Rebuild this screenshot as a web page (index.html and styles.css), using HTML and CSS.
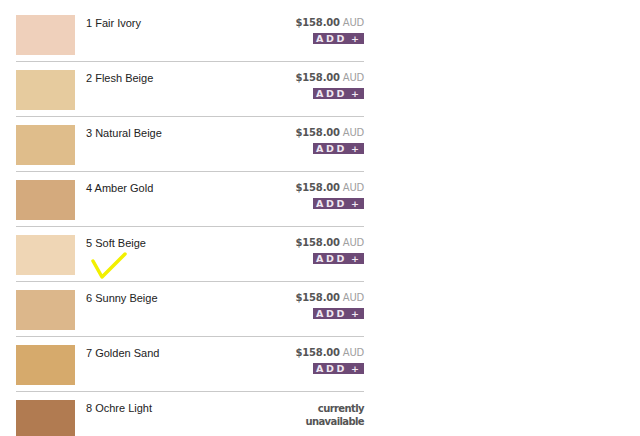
FILE: index.html
```html
<!DOCTYPE html>
<html>
<head>
<meta charset="utf-8">
<link rel="stylesheet" href="styles.css">
</head>
<body>
<div class="list">
  <div class="row">
    <div class="swatch s1"></div>
    <div class="name">1 Fair Ivory</div>
    <div class="buy"><div class="price"><b>$158.00</b> <span class="cur">AUD</span></div><div class="add"><span>ADD</span><span>+</span></div></div>
  </div>
  <div class="row">
    <div class="swatch s2"></div>
    <div class="name">2 Flesh Beige</div>
    <div class="buy"><div class="price"><b>$158.00</b> <span class="cur">AUD</span></div><div class="add"><span>ADD</span><span>+</span></div></div>
  </div>
  <div class="row">
    <div class="swatch s3"></div>
    <div class="name">3 Natural Beige</div>
    <div class="buy"><div class="price"><b>$158.00</b> <span class="cur">AUD</span></div><div class="add"><span>ADD</span><span>+</span></div></div>
  </div>
  <div class="row">
    <div class="swatch s4"></div>
    <div class="name">4 Amber Gold</div>
    <div class="buy"><div class="price"><b>$158.00</b> <span class="cur">AUD</span></div><div class="add"><span>ADD</span><span>+</span></div></div>
  </div>
  <div class="row">
    <div class="swatch s5"></div>
    <div class="name">5 Soft Beige</div>
    <div class="buy"><div class="price"><b>$158.00</b> <span class="cur">AUD</span></div><div class="add"><span>ADD</span><span>+</span></div></div>
    <svg class="check" width="44" height="32" viewBox="0 0 44 32"><path d="M7 12 L16 28 L39 5" fill="none" stroke="#f2f000" stroke-width="3.5" stroke-linecap="round" stroke-linejoin="round"/></svg>
  </div>
  <div class="row">
    <div class="swatch s6"></div>
    <div class="name">6 Sunny Beige</div>
    <div class="buy"><div class="price"><b>$158.00</b> <span class="cur">AUD</span></div><div class="add"><span>ADD</span><span>+</span></div></div>
  </div>
  <div class="row">
    <div class="swatch s7"></div>
    <div class="name">7 Golden Sand</div>
    <div class="buy"><div class="price"><b>$158.00</b> <span class="cur">AUD</span></div><div class="add"><span>ADD</span><span>+</span></div></div>
  </div>
  <div class="row">
    <div class="swatch s8"></div>
    <div class="name">8 Ochre Light</div>
    <div class="buy"><div class="na">currently<br>unavailable</div></div>
  </div>
</div>
</body>
</html>
```
FILE: styles.css
```css
html, body {
  margin: 0;
  padding: 0;
  background: #fff;
  overflow: hidden;
}
body {
  width: 640px;
  height: 436px;
}
.list {
  width: 348px;
  margin-left: 16px;
  padding-top: 15px;
}
.row {
  position: relative;
  display: flex;
  align-items: flex-start;
  height: 40px;
  padding-bottom: 6px;
  border-bottom: 1px solid #c9c9c9;
  margin-bottom: 8px;
}
.swatch {
  width: 59px;
  height: 40px;
  flex: none;
}
.s1 { background: #efd0bb; }
.s2 { background: #e6cb9e; }
.s3 { background: #dfbd8b; }
.s4 { background: #d4aa7d; }
.s5 { background: #efd6b5; }
.s6 { background: #dcb78b; }
.s7 { background: #d6aa6c; }
.s8 { background: #b17b51; }
.name {
  flex: 1;
  margin-left: 11px;
  margin-top: 2px;
  font: 11px "Liberation Sans", Arial, sans-serif;
  color: #222;
}
.buy {
  display: flex;
  flex-direction: column;
  align-items: flex-end;
  font-family: "DejaVu Sans", Verdana, sans-serif;
}
.price {
  font-size: 10px;
  line-height: 12px;
  margin-top: 2px;
  color: #555;
  letter-spacing: -0.2px;
}
.price b {
  color: #555;
}
.cur {
  color: #a0a0a0;
}
.add {
  margin-top: 4px;
  width: 51px;
  height: 11px;
  box-sizing: border-box;
  background: #6d4a76;
  color: #f0e8f2;
  font-size: 9.5px;
  line-height: 11px;
  font-weight: bold;
  display: flex;
  justify-content: space-between;
  padding: 0 5px 0 3px;
}
.add span:first-child {
  letter-spacing: 2.6px;
}
.na {
  margin-top: 2px;
  font-size: 10px;
  line-height: 13px;
  font-weight: bold;
  color: #555;
  text-align: right;
  letter-spacing: -0.6px;
}
.check {
  position: absolute;
  left: 70px;
  top: 14px;
}
```
